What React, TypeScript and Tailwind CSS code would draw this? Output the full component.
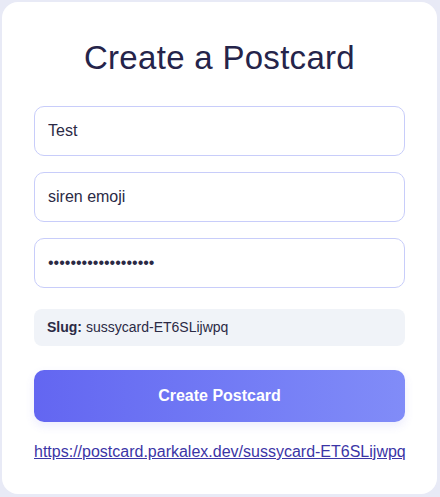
import React from "react";

export default function App() {
  const font = { fontFamily: '"Liberation Sans", Arial, Helvetica, sans-serif' };
  return (
    <div className="min-h-[497px] w-[440px] bg-[#e8eaf6] p-[2px]" style={font}>
      <div className="w-[435px] h-[492px] rounded-[16px] bg-white px-8 pt-[36px] flex flex-col">
        <h1 className="text-center text-[33px] leading-[40px] font-normal text-[#25244a] tracking-[0.3px]">
          Create a Postcard
        </h1>
        <div className="mt-[28px] flex flex-col gap-4">
          <input
            readOnly
            value="Test"
            className="h-[50px] w-full rounded-[10px] border border-[#c8cdfa] bg-white px-[13px] text-[16px] text-[#2b2a45] outline-none"
            style={font}
          />
          <input
            readOnly
            value="siren emoji"
            className="h-[50px] w-full rounded-[10px] border border-[#c8cdfa] bg-white px-[13px] text-[16px] text-[#2b2a45] outline-none"
            style={font}
          />
          <input
            readOnly
            type="password"
            value="sirenemojipassword1"
            className="h-[50px] w-full rounded-[10px] border border-[#c8cdfa] bg-white px-[13px] text-[16px] text-[#2b2a45] outline-none"
            style={font}
          />
        </div>
        <div className="mt-[21px] h-[37px] rounded-[8px] bg-[#f0f3f8] px-[13px] flex items-center text-[14px] text-[#2b2a45]">
          <span className="font-bold mr-[4px]">Slug:</span>
          <span>sussycard-ET6SLijwpq</span>
        </div>
        <button
          className="mt-[24px] h-[52px] w-full rounded-[10px] bg-gradient-to-r from-[#6366f1] to-[#818cf8] text-white text-[16px] font-bold shadow-[0_4px_10px_rgba(99,102,241,0.12)]"
          style={font}
        >
          Create Postcard
        </button>
        <a
          href="#"
          className="mt-[21px] text-[16px] leading-[18px] text-[#3b35a6] underline whitespace-nowrap"
        >
          https://postcard.parkalex.dev/sussycard-ET6SLijwpq
        </a>
      </div>
    </div>
  );
}
